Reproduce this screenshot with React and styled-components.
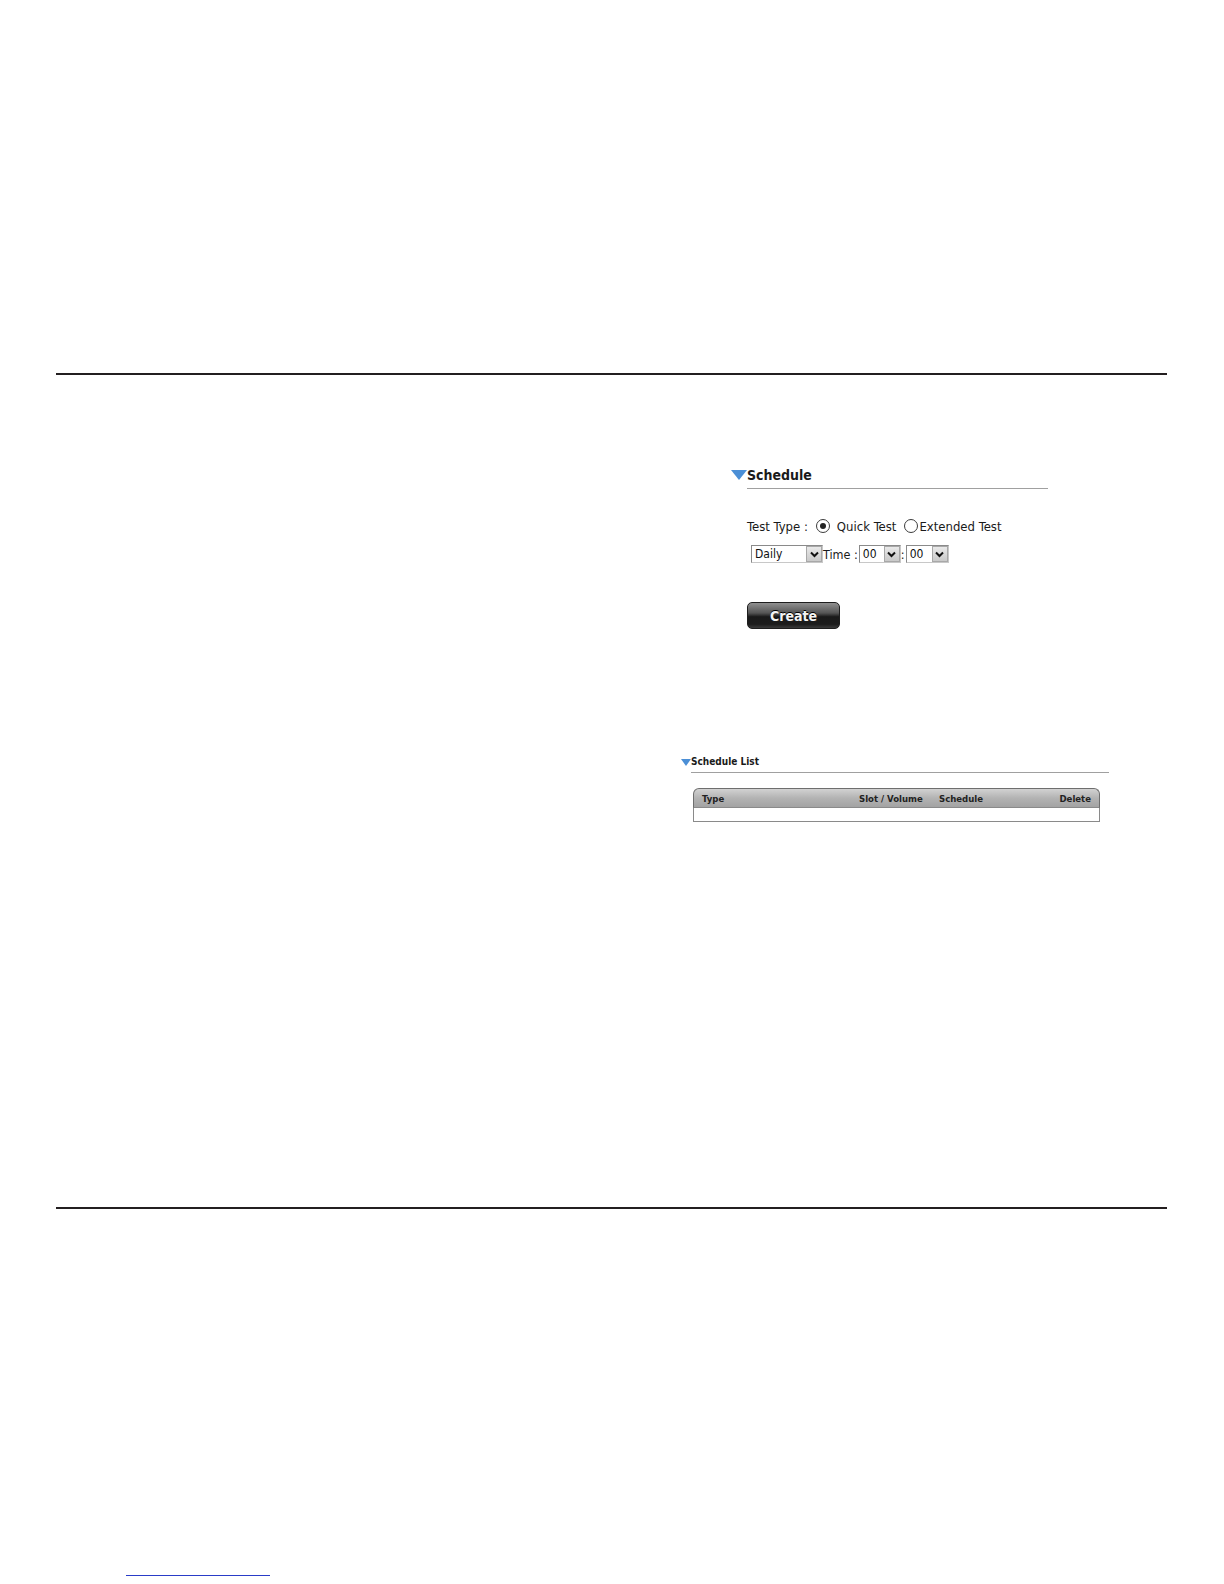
import React from 'react';
import styled, { createGlobalStyle } from 'styled-components';

const Global = createGlobalStyle`
  body {
    margin: 0;
    background: #ffffff;
    font-family: "DejaVu Sans Condensed", "DejaVu Sans", sans-serif;
  }
`;

const Page = styled.div`
  width: 1224px;
  height: 1584px;
  overflow: hidden;
`;

const Rule = styled.div`
  margin-top: ${p => p.top}px;
  margin-left: 56px;
  width: 1111px;
  height: 2px;
  background: #231f20;
`;

const Section = styled.div`
  margin-top: ${p => p.top}px;
  margin-left: ${p => p.left}px;
  display: flex;
  flex-direction: column;
`;

const Header = styled.div`
  display: flex;
  align-items: flex-start;
`;

const Arrow = styled.span`
  width: 0;
  height: 0;
  margin-top: ${p => p.offset}px;
  border-left: ${p => p.size / 2}px solid transparent;
  border-right: ${p => p.size / 2}px solid transparent;
  border-top: ${p => Math.round(p.size * 0.6)}px solid #4b8fd6;
`;

const Title = styled.div`
  width: ${p => p.width}px;
  font-weight: bold;
  font-size: ${p => p.size}px;
  line-height: ${p => p.line}px;
  color: #1a1a1a;
  padding-bottom: ${p => p.pad}px;
  border-bottom: 1px solid #a0a0a0;
`;

const Body = styled.div`
  margin-left: 16px;
  display: flex;
  flex-direction: column;
`;

const Row = styled.div`
  display: flex;
  align-items: center;
  height: 18px;
  margin-top: ${p => p.top}px;
  margin-left: ${p => p.indent || 0}px;
  font-size: ${p => p.size || 12.5}px;
  color: #1a1a1a;
  white-space: nowrap;
`;

const Label = styled.span`
  margin-right: ${p => p.gap || 0}px;
`;

const Radio = styled.span`
  box-sizing: border-box;
  width: 14px;
  height: 14px;
  border-radius: 50%;
  border: 1px solid #3c3c3c;
  background: #fff;
  display: flex;
  align-items: center;
  justify-content: center;
  margin-left: ${p => p.left || 0}px;
  margin-right: ${p => p.right || 0}px;
  &::after {
    content: '';
    display: ${p => (p.checked ? 'block' : 'none')};
    width: 6px;
    height: 6px;
    border-radius: 50%;
    background: #222;
  }
`;

const Select = styled.div`
  box-sizing: border-box;
  width: ${p => p.width}px;
  height: 18px;
  border: 1px solid #8a8a8a;
  border-right-color: #c8c8c8;
  border-bottom-color: #c8c8c8;
  background: #fff;
  display: flex;
  align-items: center;
  justify-content: space-between;
  padding-left: 3px;
  font-size: 12px;
  color: #111;
`;

const Drop = styled.span`
  box-sizing: border-box;
  width: 16px;
  height: 16px;
  background: linear-gradient(#e9e9e9, #c9c9c9);
  border: 1px solid #a8a8a8;
  display: flex;
  align-items: center;
  justify-content: center;
`;

const Chevron = () => (
  <svg width="9" height="7" viewBox="0 0 9 7">
    <path d="M1 1.5 L4.5 5 L8 1.5" fill="none" stroke="#111" strokeWidth="2" />
  </svg>
);

const Button = styled.button`
  margin-top: ${p => p.top}px;
  width: 93px;
  height: 27px;
  border: 1px solid #1e1e1e;
  border-radius: 5px;
  background: linear-gradient(#909090 0%, #555 40%, #1a1a1a 55%, #1c1c1c 85%, #3a3a3a 100%);
  color: #f4f4f4;
  font-family: "DejaVu Sans Condensed", "DejaVu Sans", sans-serif;
  font-weight: bold;
  font-size: 14px;
  text-shadow: 0 -1px 0 #000;
  padding: 0;
`;

const Table = styled.div`
  margin-top: ${p => p.top}px;
  margin-left: 12px;
  width: 407px;
  display: flex;
  flex-direction: column;
`;

const THead = styled.div`
  box-sizing: border-box;
  height: 20px;
  border: 1px solid #6e6e6e;
  border-bottom: 1px solid #8a8a8a;
  border-radius: 6px 6px 0 0;
  background: linear-gradient(#d2d2d2, #b3b3b3 50%, #a3a3a3);
  display: grid;
  grid-template-columns: 157px 80px 110px 1fr;
  align-items: center;
  padding: 0 8px 0 8px;
  font-size: 9.5px;
  font-weight: bold;
  color: #222;
`;

const Cell = styled.span`
  text-align: ${p => p.align || 'left'};
`;

const TBody = styled.div`
  height: 13px;
  border: 1px solid #8a8a8a;
  border-top: none;
  background: #fff;
`;

const Link = styled.a`
  display: block;
  margin-top: 366px;
  margin-left: 126px;
  width: 144px;
  height: 0;
  border-bottom: 1px solid #2a3cc8;
`;

export default function App() {
  return (
    <Page>
      <Global />
      <Rule top={373} />

      <Section top={92} left={731}>
        <Header>
          <Arrow size={16} offset={3} />
          <Title width={301} size={14} line={16} pad={5}>Schedule</Title>
        </Header>
        <Body>
          <Row top={28} size={13}>
            <Label gap={8}>Test Type :</Label>
            <Radio checked right={7} />
            <Label gap={8}>Quick Test</Label>
            <Radio right={1} />
            <Label>Extended Test</Label>
          </Row>
          <Row top={10} indent={4}>
            <Select width={72}>Daily<Drop><Chevron /></Drop></Select>
            <Label gap={1}>Time :</Label>
            <Select width={42}>00<Drop><Chevron /></Drop></Select>
            <Label gap={1}>:</Label>
            <Select width={43}>00<Drop><Chevron /></Drop></Select>
          </Row>
          <Button top={39}>Create</Button>
        </Body>
      </Section>

      <Section top={127} left={681}>
        <Header>
          <Arrow size={11} offset={3} />
          <Title width={418} size={10} line={12} pad={4}>Schedule List</Title>
        </Header>
        <Table top={15}>
          <THead>
            <Cell>Type</Cell>
            <Cell>Slot / Volume</Cell>
            <Cell>Schedule</Cell>
            <Cell align="right">Delete</Cell>
          </THead>
          <TBody />
        </Table>
      </Section>

      <Rule top={385} />
      <Link href="#" aria-label="link" />
    </Page>
  );
}
